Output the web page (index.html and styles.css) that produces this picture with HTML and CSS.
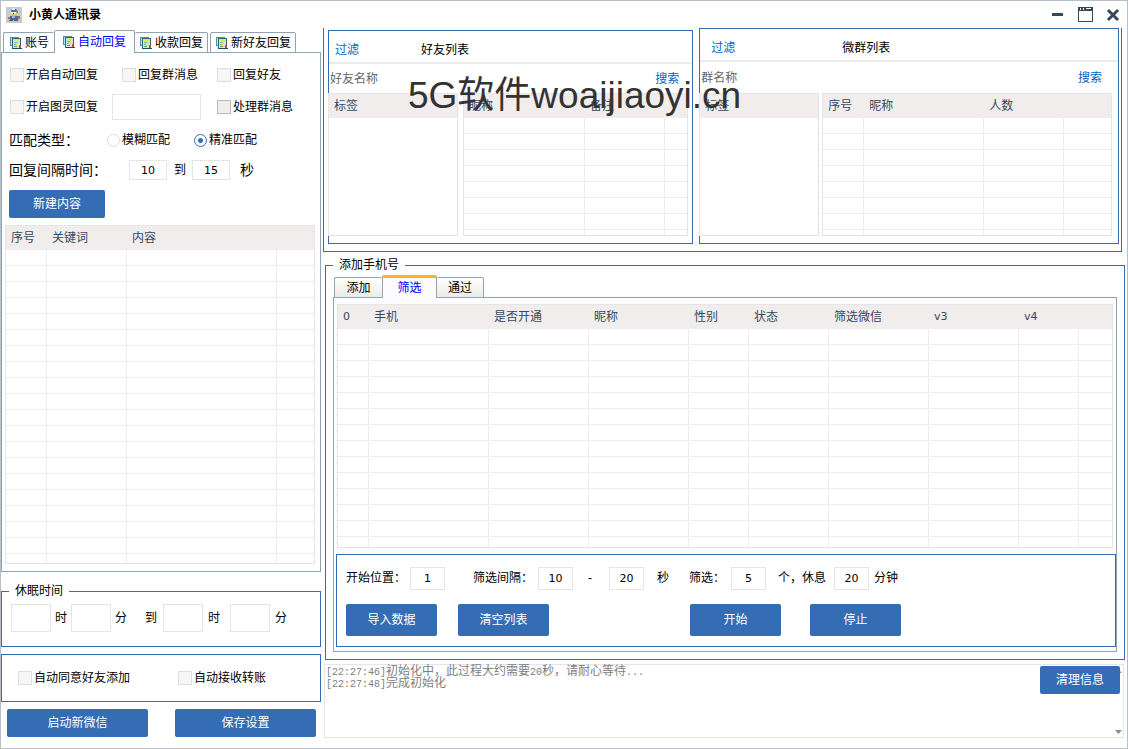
FILE: index.html
```html
<!DOCTYPE html>
<html lang="zh-CN">
<head>
<meta charset="utf-8">
<title>小黄人通讯录</title>
<link rel="stylesheet" href="styles.css">
</head>
<body>
<svg class="defs" aria-hidden="true">
  <symbol id="doc" viewBox="0 0 12 14">
    <path d="M0 1h9v9H0z" fill="#4f91a8"/>
    <path d="M1 2h2v7H1z" fill="#c3e2e8"/>
    <path d="M2 2h9v11H2z" fill="#2f6477"/>
    <path d="M3 3h7v9H3z" fill="#d3e4e6"/>
    <path d="M4 3h5v2H4z" fill="#e6ea3c"/>
    <path d="M4 6h4v1H4zM4 8h3v1H4z" fill="#7fa8b5"/>
    <path d="M7 5h1v3H7zM6 8h1v2H6z" fill="#e6ea3c"/>
    <path d="M4 10h3v1H4z" fill="#57a868"/>
    <path d="M9 9h2v3H9z" fill="#d8422c"/>
    <path d="M3 12h9v1H3z" fill="#1d4b5c"/>
  </symbol>
</svg>
<div class="window">
  <header class="titlebar">
    <svg class="app-icon" viewBox="0 0 16 16" aria-hidden="true">
      <rect width="16" height="16" fill="#c9cacb"/>
      <path d="M5 4l1-2h4l2 3v1H5z" fill="#4a74b8"/>
      <path d="M6 1h3v2H6z" fill="#e4edf7"/>
      <path d="M5 5h6v5H5z" fill="#d8bf5c"/>
      <path d="M5 5h2v2H5zM8 5h2v2H8z" fill="#e8eef2"/>
      <path d="M7 6h1v1H7z" fill="#444"/>
      <path d="M4 9h8v4H4z" fill="#4c6796"/>
      <path d="M6 9h3v2H6z" fill="#9db4d3"/>
      <path d="M2 10h2v2H2zM12 9h2v3h-2z" fill="#b56a55"/>
      <path d="M3 13h4v1H3zM8 13h4v1H8z" fill="#5a5a62"/>
    </svg>
    <h1 class="app-title">小黄人通讯录</h1>
    <div class="window-buttons">
      <button type="button" aria-label="最小化"><svg viewBox="0 0 15 15"><path d="M2 6h11v3H2z" fill="#34495e"/></svg></button>
      <button type="button" aria-label="最大化"><svg viewBox="0 0 15 15"><path d="M0 0h15v15H0zM1 4v10h13V4zM2 1v2h1V1zM5 1v2h1V1zM8 1v1h5V1z" fill="#34495e" fill-rule="evenodd"/></svg></button>
      <button type="button" aria-label="关闭"><svg viewBox="0 0 15 15"><path d="M3 4l8 8M11 4l-8 8" stroke="#34495e" stroke-width="3" stroke-linecap="square"/></svg></button>
    </div>
  </header>

  <div class="columns">
    <section class="left">
      <div class="tabs left-tabs" role="tablist">
        <button type="button" role="tab" class="tab"><svg><use href="#doc"/></svg>账号</button>
        <button type="button" role="tab" class="tab active" aria-selected="true"><svg><use href="#doc"/></svg>自动回复</button>
        <button type="button" role="tab" class="tab"><svg><use href="#doc"/></svg>收款回复</button>
        <button type="button" role="tab" class="tab separate"><svg><use href="#doc"/></svg>新好友回复</button>
      </div>
      <div class="pane reply-pane" role="tabpanel">
        <div class="options">
          <label class="check"><input type="checkbox">开启自动回复</label>
          <label class="check inset"><input type="checkbox">回复群消息</label>
          <label class="check"><input type="checkbox">回复好友</label>
          <label class="check"><input type="checkbox">开启图灵回复</label>
          <input class="box key" type="text" aria-label="图灵密钥">
          <label class="check"><input type="checkbox" class="dark">处理群消息</label>
        </div>
        <div class="match" role="radiogroup" aria-label="匹配类型">
          <span class="large match-label">匹配类型：</span>
          <label class="check"><input type="radio" name="match">模糊匹配</label>
          <label class="check"><input type="radio" name="match" checked>精准匹配</label>
        </div>
        <div class="interval">
          <label class="large interval-label" for="from">回复间隔时间：</label>
          <input class="box short" id="from" type="text" value="10">
          <label for="to">到</label>
          <input class="box short" id="to" type="text" value="15">
          <span class="large unit">秒</span>
        </div>
        <button type="button" class="btn new-btn">新建内容</button>
        <div class="grid-frame reply-table">
          <table>
            <colgroup><col class="w41"><col class="w80"><col class="w150"><col></colgroup>
            <thead><tr><th>序号</th><th>关键词</th><th>内容</th><th></th></tr></thead>
            <tbody><tr><td></td><td></td><td></td><td></td></tr></tbody>
          </table>
        </div>
      </div>

      <fieldset class="group sleep">
        <legend>休眠时间</legend>
        <div class="sleep-row">
          <input class="box" id="h1" type="text"><label for="h1" class="near">时</label>
          <input class="box" id="m1" type="text"><label for="m1" class="near">分</label>
          <span class="until">到</span>
          <input class="box" id="h2" type="text"><label for="h2" class="mid">时</label>
          <input class="box" id="m2" type="text"><label for="m2" class="last">分</label>
        </div>
      </fieldset>

      <div class="auto">
        <label class="check"><input type="checkbox">自动同意好友添加</label>
        <label class="check"><input type="checkbox">自动接收转账</label>
      </div>
      <div class="actions">
        <button type="button" class="btn">启动新微信</button>
        <button type="button" class="btn">保存设置</button>
      </div>
    </section>

    <section class="right">
      <div class="lists">
        <section class="list friends">
          <div class="list-head"><button type="button" class="link">过滤</button><h2>好友列表</h2></div>
          <div class="search"><input type="text" placeholder="好友名称" aria-label="好友名称"><button type="button" class="link">搜索</button></div>
          <div class="list-tables">
            <div class="grid-frame tags"><table><thead><tr><th>标签</th></tr></thead></table></div>
            <div class="grid-frame wide">
              <table>
                <colgroup><col class="w121"><col class="w80"><col></colgroup>
                <thead><tr><th>昵称</th><th>备注</th><th></th></tr></thead>
                <tbody><tr><td></td><td></td><td></td></tr></tbody>
              </table>
            </div>
          </div>
        </section>
        <section class="list groups">
          <div class="list-head"><button type="button" class="link">过滤</button><h2>微群列表</h2></div>
          <div class="search"><input type="text" placeholder="群名称" aria-label="群名称"><button type="button" class="link">搜索</button></div>
          <div class="list-tables">
            <div class="grid-frame tags"><table><thead><tr><th>标签</th></tr></thead></table></div>
            <div class="grid-frame wide">
              <table>
                <colgroup><col class="w41"><col class="w120"><col class="w80"><col></colgroup>
                <thead><tr><th>序号</th><th>昵称</th><th>人数</th><th></th></tr></thead>
                <tbody><tr><td></td><td></td><td></td><td></td></tr></tbody>
              </table>
            </div>
          </div>
        </section>
      </div>

      <fieldset class="group phones">
        <legend>添加手机号</legend>
        <div class="phones-body">
          <div class="tabs phone-tabs" role="tablist">
            <button type="button" role="tab" class="tab">添加</button>
            <button type="button" role="tab" class="tab active" aria-selected="true">筛选</button>
            <button type="button" role="tab" class="tab">通过</button>
          </div>
          <div class="pane filter-pane" role="tabpanel">
            <div class="grid-frame phone-table">
              <table>
                <colgroup><col class="w31"><col class="w120"><col class="w100"><col class="w100"><col class="w60"><col class="w80"><col class="w100"><col class="w90"><col class="w60"><col></colgroup>
                <thead><tr><th class="latin">0</th><th>手机</th><th>是否开通</th><th>昵称</th><th>性别</th><th>状态</th><th>筛选微信</th><th class="latin">v3</th><th class="latin">v4</th><th></th></tr></thead>
                <tbody><tr><td></td><td></td><td></td><td></td><td></td><td></td><td></td><td></td><td></td><td></td></tr></tbody>
              </table>
            </div>
            <div class="controls">
              <div class="params">
                <div class="param start"><label for="start">开始位置：</label><input class="box" id="start" type="text" value="1"></div>
                <div class="param gap-from"><label for="gap1">筛选间隔：</label><input class="box" id="gap1" type="text" value="10"></div>
                <span class="dash">-</span>
                <div class="param gap-to"><input class="box" id="gap2" type="text" value="20"><label for="gap2">秒</label></div>
                <div class="param count"><label for="count">筛选：</label><input class="box" id="count" type="text" value="5"></div>
                <div class="param rest"><label for="rest">个，休息</label><input class="box" id="rest" type="text" value="20"><span>分钟</span></div>
              </div>
              <div class="commands">
                <button type="button" class="btn">导入数据</button>
                <button type="button" class="btn">清空列表</button>
                <button type="button" class="btn run">开始</button>
                <button type="button" class="btn stop">停止</button>
              </div>
            </div>
          </div>
        </div>
      </fieldset>

      <div class="log">
        <p><span class="mono">[22:27:46]</span>初始化中，此过程大约需要<span class="mono">20</span>秒，请耐心等待<span class="mono">...</span></p>
        <p><span class="mono">[22:27:48]</span>完成初始化</p>
        <svg class="arrow up" viewBox="0 0 7 4" aria-hidden="true"><path d="M0 4L3.500 0 7 4z" fill="#9a9ea4"/></svg>
        <svg class="arrow down" viewBox="0 0 7 4" aria-hidden="true"><path d="M0 0h7L3.500 4z" fill="#858d9c"/></svg>
        <button type="button" class="btn clear">清理信息</button>
      </div>
    </section>
  </div>
  <div class="watermark">5G软件woaijiaoyi.cn</div>
</div>
</body>
</html>
```
FILE: styles.css
```css
:root {
  --blue: #346db3;
  --link: #0a62c2;
  --steel: #8fa5b3;
  --line: #e5e5e5;
  --ink: #34495e;
}

* { box-sizing: border-box; }

body {
  margin: 0;
  font: 12px/16px "Liberation Sans", "Noto Sans CJK SC", sans-serif;
  color: #000;
  background: #fff;
}

button, input { font: inherit; color: inherit; }
button { padding: 0; border: 0; background: none; white-space: nowrap; }
h1, h2, p { margin: 0; font-size: 12px; }
.defs { display: none; }

.window {
  position: relative;
  display: flex;
  flex-direction: column;
  min-height: 100vh;
  border: 1px solid #b9bfc6;
}

.titlebar {
  display: flex;
  align-items: center;
  height: 27px;
  padding: 0 6px 0 5px;
}
.app-icon { width: 16px; height: 16px; }
.app-title { margin-left: 7px; font-weight: bold; }
.window-buttons { display: flex; gap: 13px; margin-left: auto; }
.window-buttons button { width: 15px; height: 15px; }
.window-buttons svg { display: block; width: 15px; height: 15px; }

.columns { flex: 1; display: flex; gap: 2px; }
.left { width: 320px; flex: none; display: flex; flex-direction: column; padding: 2px 0 11px; }
.right { flex: 1; min-width: 0; display: flex; flex-direction: column; padding: 0 2px 10px 0; }

/* tabs */
.tabs { display: flex; align-items: flex-end; position: relative; margin-bottom: -1px; z-index: 1; }
.tab {
  display: flex;
  align-items: center;
  justify-content: center;
  height: 21px;
  border: 1px solid var(--steel);
  border-left-width: 0;
  border-radius: 2px 2px 0 0;
  background: #fff;
}
.tab:first-child, .tab.separate { border-left-width: 1px; }
.tab.active { height: 23px; border-left-width: 1px; border-bottom: 0; color: #00f; }
.tab:has(+ .active) { border-right-width: 0; }
.tab svg { width: 12px; height: 14px; margin-right: 3px; }
.left-tabs { padding-left: 2px; }
.left-tabs .tab { padding: 0 4px 0 5px; }
.left-tabs .tab:first-child { padding: 0 5px 0 6px; }
.left-tabs .tab.active { padding: 0 8px; }
.left-tabs .separate { margin-left: 2px; }

.pane { border: 1px solid var(--steel); }
.reply-pane { flex: 1; display: flex; flex-direction: column; padding: 14px 5px 7px 3px; }

/* form controls */
.check { display: flex; align-items: center; gap: 2px; }
.check input {
  appearance: none;
  flex: none;
  width: 14px;
  height: 14px;
  margin: 0;
  border: 1px solid #dedede;
  background: #f7f5f5;
}
.check input.dark { border-color: #bbb; background: #f1eded; }
.check input[type="radio"] { border-radius: 50%; background: #fff; width: 13px; height: 13px; }
.check input[type="radio"]:checked {
  border-color: var(--blue);
  background: radial-gradient(circle, var(--blue) 0 2px, #fff 3px);
}
.box {
  min-width: 0;
  padding: 0;
  border: 1px solid var(--line);
  background: #fff;
  text-align: center;
  font: 11px/16px "DejaVu Sans", sans-serif;
}
.btn {
  border-radius: 2px;
  background: var(--blue);
  color: #fff;
}
.link { color: var(--link); }
.large { font-size: 14px; }

.options {
  display: grid;
  grid-template-columns: 102px 105px 1fr;
  grid-template-rows: 16px 26px;
  row-gap: 11px;
  align-items: center;
  padding-left: 5px;
}
.options .inset { padding-left: 10px; }
.options .key { width: 89px; height: 26px; }

.match { display: flex; align-items: center; gap: 24px; margin-top: 12px; padding-left: 4px; height: 16px; }
.match-label { width: 74px; white-space: nowrap; }
.interval { display: flex; align-items: center; margin-top: 12px; padding-left: 4px; height: 20px; }
.interval-label { width: 120px; white-space: nowrap; }
.interval .short { width: 38px; height: 20px; }
.interval label[for="to"] { margin: 0 6px 0 7px; }
.interval .unit { margin-left: 10px; }
.new-btn { width: 96px; height: 28px; margin: 10px 0 7px 4px; }

/* list grids */
.grid-frame { display: grid; border: 1px solid var(--line); }
.grid-frame table { width: 100%; height: 100%; border-collapse: collapse; table-layout: fixed; }
.grid-frame thead { background: #f1eded; }
.grid-frame thead tr { height: 24px; }
.grid-frame th {
  height: 24px;
  padding: 0 0 0 5px;
  text-align: left;
  font-weight: normal;
  white-space: nowrap;
  color: var(--ink);
}
.grid-frame td {
  padding: 0;
  background:
    linear-gradient(#eee, #eee) right / 1px 100% no-repeat,
    repeating-linear-gradient(#fff 0 15px, #eee 15px 16px);
}
.grid-frame td:last-child { background: repeating-linear-gradient(#fff 0 15px, #eee 15px 16px); }
.grid-frame .latin { font: 11px/16px "DejaVu Sans", sans-serif; }
.w31 { width: 31px; }
.w41 { width: 41px; }
.w60 { width: 60px; }
.w80 { width: 80px; }
.w90 { width: 90px; }
.w100 { width: 100px; }
.w120 { width: 120px; }
.w121 { width: 121px; }
.w150 { width: 150px; }
.reply-table { flex: 1; }

/* bordered groups */
.group { min-width: 0; margin: 0; padding: 0; border: 1px solid var(--blue); }
.group legend { margin-left: 7px; padding: 0 6px; line-height: 16px; }
.sleep { margin-top: 11px; }
.sleep-row { display: flex; align-items: center; padding: 5px 9px 14px; }
.sleep-row .box { width: 40px; height: 28px; }
.sleep-row .near { margin: 0 4px; }
.sleep-row .until { margin: 0 6px 0 14px; }
.sleep-row .mid { margin: 0 10px 0 5px; }
.sleep-row .last { margin-left: 5px; }

.auto {
  display: grid;
  grid-template-columns: 160px 1fr;
  align-items: center;
  height: 48px;
  margin-top: 7px;
  padding-left: 16px;
  border: 1px solid var(--blue);
}
.actions { display: flex; gap: 27px; margin-top: 7px; padding: 0 5px 0 6px; }
.actions .btn { flex: 1; height: 28px; }

/* friend and group lists */
.lists {
  display: flex;
  align-items: flex-end;
  gap: 6px;
  margin-right: 3px;
  padding: 0 2px 7px 4px;
  border: 1px solid var(--blue);
  border-top: 0;
}
.list { min-width: 0; border: 1px solid var(--blue); }
.friends { flex: 365 1 0; }
.groups { flex: 420 1 0; }
.list-head { display: flex; align-items: center; height: 33px; padding-top: 6px; border-bottom: 2px solid #ebebeb; }
.list-head h2 { font-weight: normal; }
.friends .list-head { padding-left: 6px; }
.friends .list-head h2 { margin-left: 62px; }
.groups .list-head { padding-left: 11px; }
.groups .list-head h2 { margin-left: 107px; }
.search { display: flex; align-items: center; height: 29px; padding: 0 13px 0 1px; }
.groups .search { height: 31px; padding-right: 16px; }
.search input { flex: 1; min-width: 0; padding: 0; border: 0; background: none; }
.search input::placeholder { color: #666; opacity: 1; }
.list-tables { display: flex; gap: 5px; height: 150px; padding: 0 4px 7px 0; margin-left: -1px; }
.groups .list-tables { gap: 3px; padding-right: 6px; }
.tags { width: 130px; flex: none; align-content: start; }
.groups .tags { width: 120px; }
.wide { flex: 1; min-width: 0; }

/* phone numbers */
.phones { flex: 1; display: flex; flex-direction: column; margin: 5px 0 0 2px; }
.phones-body { flex: 1; display: flex; flex-direction: column; padding: 2px 7px 7px; }
.phone-tabs { padding-left: 1px; }
.phone-tabs .tab { width: 47px; background: linear-gradient(#fff, #ecebe5); }
.phone-tabs .tab:first-child { width: 48px; }
.phone-tabs .tab.active { width: 55px; border-top: 3px solid #f9b32e; background: #fcfcff; }
.filter-pane { flex: 1; display: flex; flex-direction: column; padding: 6px 0 4px 2px; background: #fcfcff; }
.phone-table { flex: 1; margin: 0 3px 6px 1px; background: #fff; }
.controls { padding: 11px 9px 10px; border: 1px solid var(--blue); background: #fff; }
.params { display: flex; align-items: center; height: 24px; white-space: nowrap; }
.param { display: flex; align-items: center; }
.param .box { width: 35px; height: 23px; }
.start { gap: 4px; margin-right: 28px; }
.gap-from { gap: 5px; }
.dash { margin: 0 17px 0 15px; }
.gap-to { gap: 13px; margin-right: 20px; }
.count { gap: 6px; margin-right: 12px; }
.rest { gap: 8px; }
.rest .box { margin-right: -3px; }
.commands { display: flex; gap: 21px; margin-top: 14px; }
.commands .btn { width: 91px; height: 32px; }
.commands .run { margin-left: 120px; }
.commands .stop { margin-left: 8px; }

/* message log */
.log {
  position: relative;
  height: 74px;
  margin: 4px 1px 0;
  padding: 0 1px;
  border: 1px solid var(--line);
  color: #808080;
  line-height: 12px;
}
.log p { height: 12px; }
.mono { font-family: "Liberation Mono", monospace; font-size: 10px; }
.log .clear { position: absolute; top: 1px; right: 3px; width: 80px; height: 28px; }
.arrow { position: absolute; right: 1px; width: 7px; height: 4px; }
.arrow.up { top: 4px; }
.arrow.down { bottom: 3px; }

.watermark {
  position: absolute;
  top: 74px;
  left: 407px;
  font-size: 37px;
  line-height: 42px;
  color: #333;
  white-space: nowrap;
  pointer-events: none;
  z-index: 2;
}
```
